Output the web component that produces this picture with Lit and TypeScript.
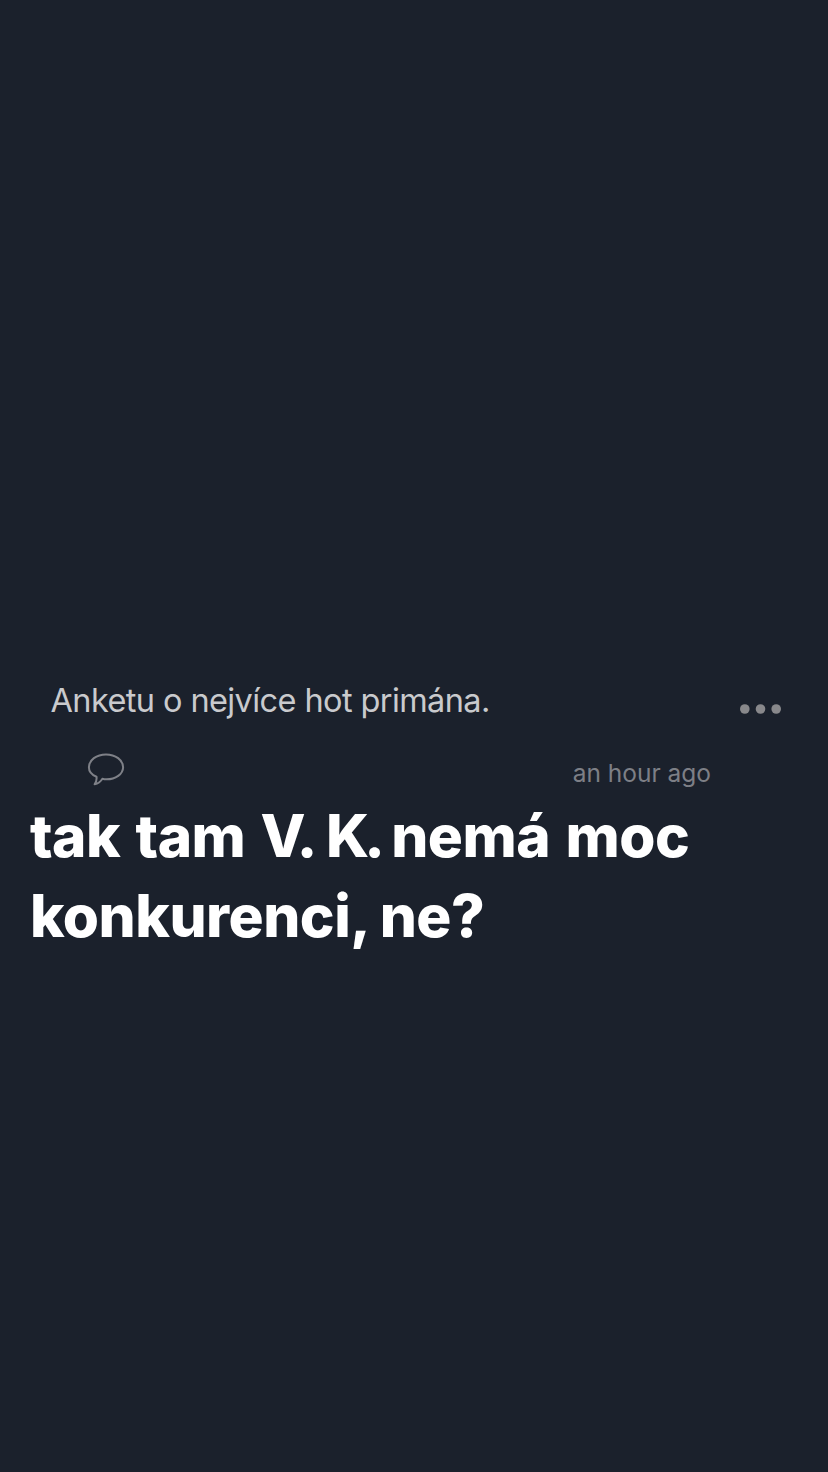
import { LitElement, html, css } from "lit";
import { customElement } from "lit/decorators.js";

@customElement("app-root")
class AppRoot extends LitElement {
  static styles = css`
    :host {
      display: flex;
      flex-direction: column;
      box-sizing: border-box;
      height: 1472px;
      padding-top: 681px;
      background: #1b212c;
      font-family: Inter, "Liberation Sans", sans-serif;
    }
    .row {
      display: flex;
      justify-content: space-between;
      padding: 0 46px 0 50.5px;
    }
    .title {
      font-size: 32.5px;
      line-height: 40px;
      letter-spacing: -0.6px;
      color: #c9cacd;
      white-space: nowrap;
    }
    .dots {
      width: 42px;
      height: 10px;
      margin-top: 23px;
      fill: #88888b;
    }
    .meta {
      display: flex;
      justify-content: space-between;
      padding: 31px 117px 0 86px;
      height: 50px;
    }
    .bubble {
      width: 40px;
      height: 36px;
      fill: none;
      stroke: #7e8087;
      stroke-width: 2;
      stroke-linejoin: round;
    }
    .time {
      padding-top: 6px;
      font-size: 24.5px;
      line-height: 30px;
      color: #7d7f86;
      white-space: nowrap;
    }
    .reply {
      margin: -6px 0 0 30px;
      font-size: 58.5px;
      line-height: 80px;
      font-weight: 800;
      letter-spacing: -0.5px;
      word-spacing: 3px;
      color: #fff;
      white-space: nowrap;
    }
    .tight {
      word-spacing: -3px;
    }
    .v {
      letter-spacing: -9px;
    }
    .k {
      letter-spacing: -5px;
    }
  `;

  render() {
    return html`
      <div class="row">
        <div class="title">Anketu o nejvíce hot primána.</div>
        <svg class="dots" viewBox="0 0 42 10">
          <circle cx="4.8" cy="5" r="4.8" />
          <circle cx="20.5" cy="5" r="4.8" />
          <circle cx="36.2" cy="5" r="4.8" />
        </svg>
      </div>
      <div class="meta">
        <svg class="bubble" viewBox="0 0 40 36">
          <path d="M20 2.4C29.5 2.4 37.1 8.1 37.1 15.2C37.1 22.1 29.5 27.3 20.6 27.3C19 27.3 17.6 27.1 16.4 26.7C14.6 29.6 12 31.6 8.6 32.3C10.2 30.2 10.9 27.6 10.5 24.7C5.8 22.8 2.9 19.4 2.9 15.2C2.9 8.1 10.5 2.4 20 2.4Z" />
        </svg>
        <div class="time">an hour ago</div>
      </div>
      <div class="reply">
        <div>tak tam <span class="v">V</span>.<span class="tight"> <span class="k">K</span>. </span>nemá moc</div>
        <div>konkurenci,<span class="tight"> </span>ne?</div>
      </div>
    `;
  }
}
